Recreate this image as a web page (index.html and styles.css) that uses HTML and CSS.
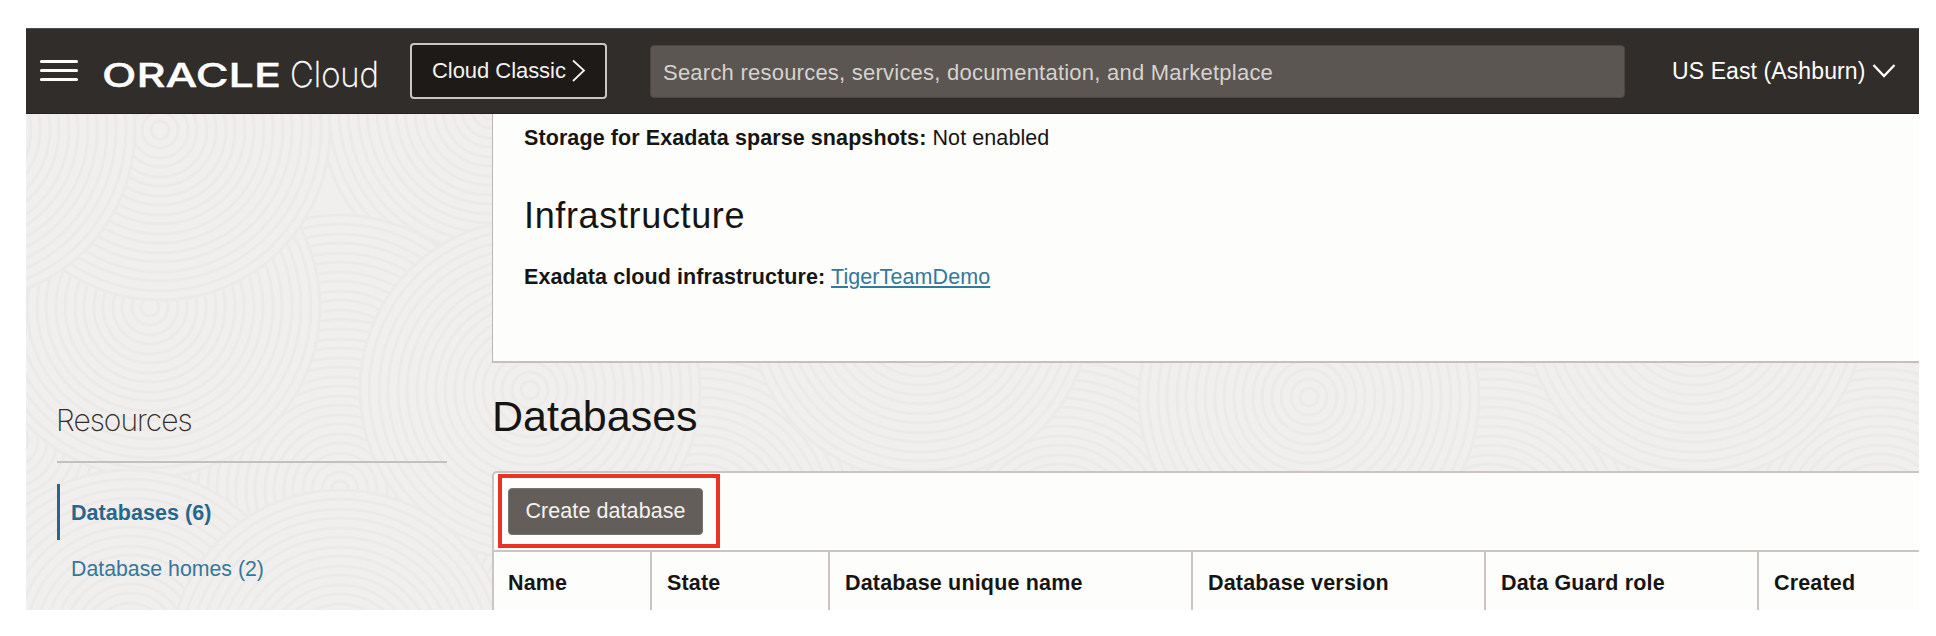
FILE: index.html
```html
<!DOCTYPE html>
<html lang="en">
<head>
<meta charset="utf-8">
<title>Oracle Cloud</title>
<link rel="stylesheet" href="styles.css">
</head>
<body>
<div class="window">
  <header class="topbar">
    <svg class="menu" width="40" height="24" viewBox="0 0 40 24"><path d="M2.500 3.500H37.500M2.500 12.500H37.500M2.500 21.500H37.500" stroke="#fff" stroke-width="3.200" stroke-linecap="round"/></svg>
    <svg class="brand" width="284" height="48" viewBox="0 0 284 48">
      <text class="brand-oracle" x="-1" y="34" textLength="179" lengthAdjust="spacingAndGlyphs">ORACLE</text>
      <text class="brand-cloud" x="187" y="34" textLength="89" lengthAdjust="spacingAndGlyphs">Cloud</text>
    </svg>
    <div class="classic"><span>Cloud Classic</span><svg width="15" height="24" viewBox="0 0 15 24"><path d="M2 1.500L13 11.500L2 22" fill="none" stroke="#f4f2f0" stroke-width="1.800"/></svg></div>
    <div class="search">Search resources, services, documentation, and Marketplace</div>
    <div class="region"><span>US East (Ashburn)</span><svg width="24" height="16" viewBox="0 0 24 16"><path d="M1.500 2L12 13L22.500 2" fill="none" stroke="#fff" stroke-width="2.300"/></svg></div>
  </header>
  <div class="content">
    <svg class="texture" width="1893" height="496" viewBox="26 114 1893 496">
      <defs>
        <g id="rings">
          <circle r="170"/><circle r="161"/><circle r="151"/><circle r="142"/><circle r="132"/><circle r="123"/><circle r="113"/><circle r="104"/><circle r="94"/><circle r="85"/><circle r="75"/><circle r="66"/><circle r="56"/><circle r="47"/><circle r="37"/><circle r="28"/><circle r="18"/><circle r="9"/>
        </g>
      </defs>
      <g class="ring-set">
        <use href="#rings" x="700" y="520"/>
        <use href="#rings" x="1060" y="530"/>
        <use href="#rings" x="1490" y="530"/>
        <use href="#rings" x="1880" y="520"/>
        <use href="#rings" x="10" y="440"/>
        <use href="#rings" x="490" y="110"/>
        <use href="#rings" x="340" y="385"/>
        <use href="#rings" x="340" y="490"/>
        <use href="#rings" x="150" y="307"/>
        <use href="#rings" x="160" y="130"/>
        <use href="#rings" x="-35" y="130"/>
        <use href="#rings" x="530" y="390"/>
        <use href="#rings" x="1309" y="397"/>
        <use href="#rings" x="920" y="310"/>
        <use href="#rings" x="1695" y="310"/>
        <use href="#rings" x="130" y="640"/>
        <use href="#rings" x="340" y="660"/>
      </g>
    </svg>
    <aside class="sidebar">
      <h3 class="side-title">Resources</h3>
      <nav class="side-nav">
        <a class="side-link active">Databases (6)</a>
        <a class="side-link">Database homes (2)</a>
      </nav>
    </aside>
    <main class="main">
      <section class="details">
        <p><b>Storage for Exadata sparse snapshots:</b> Not enabled</p>
        <h2>Infrastructure</h2>
        <p><b>Exadata cloud infrastructure:</b> <a class="link">TigerTeamDemo</a></p>
      </section>
      <h1 class="title">Databases</h1>
      <section class="table">
        <div class="toolbar"><button class="create">Create database</button><div class="highlight"></div></div>
        <div class="columns">
          <div>Name</div><div>State</div><div>Database unique name</div><div>Database version</div><div>Data Guard role</div><div>Created</div>
        </div>
      </section>
    </main>
  </div>
</div>
</body>
</html>
```
FILE: styles.css
```css
* { box-sizing: border-box; }
body { margin: 0; background: #fff; font-family: "Liberation Sans", Arial, sans-serif; font-size: 21.5px; color: #161513; }
h1, h2, h3, p { margin: 0; font-weight: 400; }
.window { width: 1893px; height: 582px; margin: 28px 0 0 26px; overflow: hidden; }

.topbar { height: 86px; display: flex; align-items: flex-start; background: #312d2a; border-top: 1px solid #4b4e46; border-bottom: 1px solid #26211e; color: #fff; }
.menu { margin: 29px 0 0 13px; }
.brand { margin: 24px 0 0 24px; flex: none; overflow: visible; }
.brand text { fill: #fff; }
.brand-oracle { font: 500 33px Inter, sans-serif; stroke: #fff; stroke-width: .4px; }
.brand-cloud { font: 200 35px Inter, sans-serif; stroke: #fff; stroke-width: .3px; }
.classic { margin: 14px 0 0 23px; width: 197px; height: 56px; border: 2px solid #c9c5c2; border-radius: 4px; background: #1e1a17; display: flex; align-items: center; padding-left: 20px; gap: 5px; font-size: 22px; line-height: 50px; letter-spacing: -0.05px; white-space: nowrap; flex: none; color: #f4f2f0; }
.classic span { margin-top: -1px; }
.search { margin: 16px 0 0 43px; width: 975px; height: 53px; border: 1px solid #4b4643; border-radius: 4px; background: #5b5652; color: #d6d2cf; padding-left: 12px; font-size: 22px; letter-spacing: 0.23px; line-height: 53px; flex: none; }
.region { margin: 15px 0 0 47px; display: flex; align-items: center; gap: 7px; font-size: 23px; letter-spacing: .1px; line-height: 54px; white-space: nowrap; }

.content { position: relative; height: 496px; display: flex; background: #f0efee; }
.texture { position: absolute; left: 0; top: 0; }
.ring-set { fill: #f0efee; stroke: #ebeae9; stroke-width: 3; }
.sidebar { position: relative; width: 466px; flex: none; padding: 283px 45px 0 31px; }
.side-title { height: 66px; border-bottom: 2px solid #c5c0bd; font: 200 30px/47px Inter, sans-serif; letter-spacing: -1px; text-indent: -1px; color: #312d2a; }
.side-nav { padding-top: 21px; }
.side-link { display: block; height: 56px; padding-left: 14px; line-height: 58px; font-size: 21.3px; color: #34789b; }
.side-link.active { border-left: 3px solid #27678b; padding-left: 11px; font-size: 21.5px; letter-spacing: .05px; font-weight: 700; color: #27678b; }

.main { position: relative; flex: 1; min-width: 0; }
.details { height: 249px; padding: 9px 0 0 31px; border-left: 1px solid #bcb6b1; border-bottom: 2px solid #c5c0bd; background: #fdfdfb; letter-spacing: .09px; }
.details p { line-height: 30px; }
.details h2 { font-size: 36px; line-height: 44px; letter-spacing: .65px; margin: 41px 0 24px; }
.link { color: #34789b; text-decoration: underline; text-decoration-thickness: 2px; text-underline-offset: 2px; }
.title { font-size: 43px; line-height: 60px; height: 108px; padding-top: 23px; }
.table { height: 139px; border: 2px solid #cac5c2; border-right: 0; border-bottom: 0; border-radius: 5px 0 0 0; background: #fdfdfb; }
.toolbar { position: relative; height: 79px; padding: 15px 0 0 14px; border-bottom: 2px solid #cac5c2; }
.create { display: block; width: 195px; height: 47px; padding: 0; border: 1px solid #7a7470; border-radius: 4px; background: #645e5a; color: #f5f3f1; font: 21.5px/45px "Liberation Sans", Arial, sans-serif; letter-spacing: .08px; }
.highlight { position: absolute; left: 4px; top: 1px; width: 222px; height: 74px; border: 4px solid #ea3323; }
.columns { display: grid; grid-template-columns: 158px 178px 363px 293px 273px 1fr; height: 60px; font-weight: 700; line-height: 62px; letter-spacing: .17px; white-space: nowrap; }
.columns div { padding-left: 15px; border-right: 2px solid #cac5c2; }
.columns div:first-child { padding-left: 14px; }
.columns div:last-child { border-right: 0; }
```
